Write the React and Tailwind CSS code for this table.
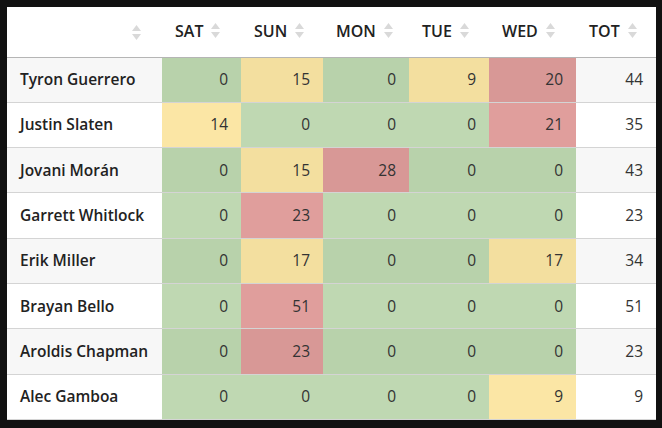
import React from 'react'

const days = ['SAT', 'SUN', 'MON', 'TUE', 'WED']
const widths = ['w-[79px]', 'w-[82px]', 'w-[86px]', 'w-[80px]', 'w-[87px]']

// g = green, y = yellow, r = red
const rows = [
  { name: 'Tyron Guerrero', cells: [[0, 'g'], [15, 'y'], [0, 'g'], [9, 'y'], [20, 'r']], tot: 44 },
  { name: 'Justin Slaten', cells: [[14, 'y'], [0, 'g'], [0, 'g'], [0, 'g'], [21, 'r']], tot: 35 },
  { name: 'Jovani Morán', cells: [[0, 'g'], [15, 'y'], [28, 'r'], [0, 'g'], [0, 'g']], tot: 43 },
  { name: 'Garrett Whitlock', cells: [[0, 'g'], [23, 'r'], [0, 'g'], [0, 'g'], [0, 'g']], tot: 23 },
  { name: 'Erik Miller', cells: [[0, 'g'], [17, 'y'], [0, 'g'], [0, 'g'], [17, 'y']], tot: 34 },
  { name: 'Brayan Bello', cells: [[0, 'g'], [51, 'r'], [0, 'g'], [0, 'g'], [0, 'g']], tot: 51 },
  { name: 'Aroldis Chapman', cells: [[0, 'g'], [23, 'r'], [0, 'g'], [0, 'g'], [0, 'g']], tot: 23 },
  { name: 'Alec Gamboa', cells: [[0, 'g'], [0, 'g'], [0, 'g'], [0, 'g'], [9, 'y']], tot: 9 },
]

const striped = { g: 'bg-[#b8d2ab]', y: 'bg-[#f3df9f]', r: 'bg-[#d89896]' }
const plain = { g: 'bg-[#bfd8b2]', y: 'bg-[#fbe6a5]', r: 'bg-[#e09e9c]' }

function SortIcon() {
  return (
    <svg width="9" height="15" viewBox="0 0 9 15" className="inline-block shrink-0">
      <polygon points="0,6 4.5,0 9,6" fill="#d9d9d9" />
      <polygon points="0,9 9,9 4.5,15" fill="#d9d9d9" />
    </svg>
  )
}

function App() {
  return (
    <div className="w-[662px] h-[428px] bg-[#111111] p-[7px] font-['Open_Sans',sans-serif]">
      <table className="w-[649px] bg-white border-collapse table-fixed">
        <thead>
          <tr className="h-[50px] border-b border-[#b5b5b5]">
            <th className="w-[155px] pr-[21px] pb-[2px] text-right align-middle">
              <SortIcon />
            </th>
            {days.map((d, i) => (
              <th key={d} className={`${widths[i]} pl-[13px] pb-[2px] text-left align-middle`}>
                <span className="inline-flex items-center gap-[8px] text-[16px] font-semibold text-[#222]">
                  {d}
                  <SortIcon />
                </span>
              </th>
            ))}
            <th className="w-[80px] pl-[13px] pb-[2px] text-left align-middle">
              <span className="inline-flex items-center gap-[8px] text-[16px] font-semibold text-[#222]">
                TOT
                <SortIcon />
              </span>
            </th>
          </tr>
        </thead>
        <tbody>
          {rows.map((row, r) => {
            const odd = r % 2 === 0
            const colors = odd ? striped : plain
            return (
              <tr key={row.name} className={`h-[45.3px] border-b border-[#d4d4d4] ${odd ? 'bg-[#f7f7f7]' : 'bg-white'}`}>
                <td className="pl-[13px] text-[15.5px] font-semibold text-[#222] whitespace-nowrap">{row.name}</td>
                {row.cells.map(([v, c], i) => (
                  <td key={i} className={`${colors[c]} pr-[13px] text-right text-[15.5px] text-[#333]`}>{v}</td>
                ))}
                <td className="pr-[13px] text-right text-[15.5px] text-[#333]">{row.tot}</td>
              </tr>
            )
          })}
        </tbody>
      </table>
    </div>
  )
}

export default App
